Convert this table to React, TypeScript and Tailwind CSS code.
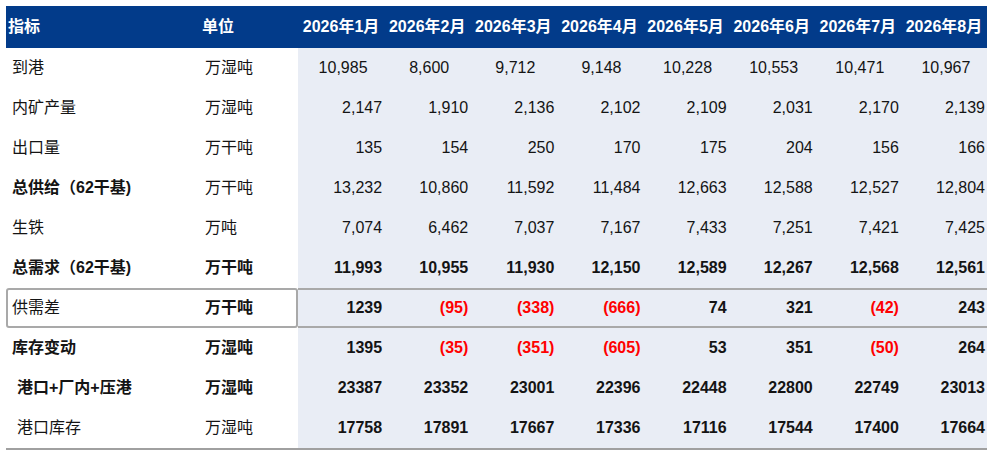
import React from "react";

type Row = {
  label: string;
  unit: string;
  values: string[];
  labelBold?: boolean;
  unitBold?: boolean;
  valueBold?: boolean;
  indent?: boolean;
  center?: boolean;
  boxed?: boolean;
};

const months = ["2026年1月", "2026年2月", "2026年3月", "2026年4月", "2026年5月", "2026年6月", "2026年7月", "2026年8月"];

const rows: Row[] = [
  { label: "到港", unit: "万湿吨", center: true, values: ["10,985", "8,600", "9,712", "9,148", "10,228", "10,553", "10,471", "10,967"] },
  { label: "内矿产量", unit: "万湿吨", values: ["2,147", "1,910", "2,136", "2,102", "2,109", "2,031", "2,170", "2,139"] },
  { label: "出口量", unit: "万干吨", values: ["135", "154", "250", "170", "175", "204", "156", "166"] },
  { label: "总供给（62干基)", unit: "万干吨", labelBold: true, values: ["13,232", "10,860", "11,592", "11,484", "12,663", "12,588", "12,527", "12,804"] },
  { label: "生铁", unit: "万吨", values: ["7,074", "6,462", "7,037", "7,167", "7,433", "7,251", "7,421", "7,425"] },
  { label: "总需求（62干基)", unit: "万干吨", labelBold: true, unitBold: true, valueBold: true, values: ["11,993", "10,955", "11,930", "12,150", "12,589", "12,267", "12,568", "12,561"] },
  { label: "供需差", unit: "万干吨", unitBold: true, valueBold: true, boxed: true, values: ["1239", "(95)", "(338)", "(666)", "74", "321", "(42)", "243"] },
  { label: "库存变动", unit: "万湿吨", labelBold: true, unitBold: true, valueBold: true, values: ["1395", "(35)", "(351)", "(605)", "53", "351", "(50)", "264"] },
  { label: "港口+厂内+压港", unit: "万湿吨", labelBold: true, unitBold: true, valueBold: true, indent: true, values: ["23387", "23352", "23001", "22396", "22448", "22800", "22749", "23013"] },
  { label: "港口库存", unit: "万湿吨", valueBold: true, indent: true, values: ["17758", "17891", "17667", "17336", "17116", "17544", "17400", "17664"] },
];

function DataRow({ row }: { row: Row }) {
  const left = (
    <div className={`flex w-[292px] h-full items-center ${row.boxed ? "-ml-[2px]" : ""}`}>
      <div className={`w-[194px] shrink-0 ${row.indent ? "pl-[11px]" : "pl-[6px]"} ${row.labelBold ? "font-bold" : ""}`}>{row.label}</div>
      <div className={`w-[98px] shrink-0 pl-[5px] ${row.unitBold ? "font-bold" : ""}`}>{row.unit}</div>
    </div>
  );

  return (
    <div className="flex h-[40px]">
      {row.boxed ? (
        <div className="w-[292px] shrink-0 h-full border-2 border-[#a9a9a9] rounded-[3px] bg-white">{left}</div>
      ) : (
        left
      )}
      {row.values.map((v, i) => {
        const neg = v.startsWith("(");
        return (
          <div
            key={i}
            className={`flex-1 h-full flex items-center bg-[#e9edf5] ${row.center ? "justify-center pl-[4px]" : "justify-end pr-[2px]"} ${row.valueBold ? "font-bold" : ""} ${neg ? "text-[#ff0000]" : ""} ${row.boxed ? "border-y-2 border-[#a9a9a9]" : ""}`}
          >
            {v}
          </div>
        );
      })}
    </div>
  );
}

export default function App() {
  return (
    <div className="w-[996px] h-[458px] bg-white pl-[6px] pt-[6px] text-[16px] text-[#141414] font-['Liberation_Sans','Noto_Sans_CJK_SC',sans-serif]">
      <div className="w-[981px]">
        {/* header */}
        <div className="flex h-[42px] bg-[#023b8a] text-white font-bold items-center">
          <div className="w-[194px] pl-[2px]">指标</div>
          <div className="w-[98px] pl-[2px]">单位</div>
          {months.map((m) => (
            <div key={m} className="flex-1 text-center">
              {m}
            </div>
          ))}
        </div>

        {rows.map((r) => (
          <DataRow key={r.label} row={r} />
        ))}

        <div className="h-[2px] bg-[#a0a0a0]" />
      </div>
    </div>
  );
}
